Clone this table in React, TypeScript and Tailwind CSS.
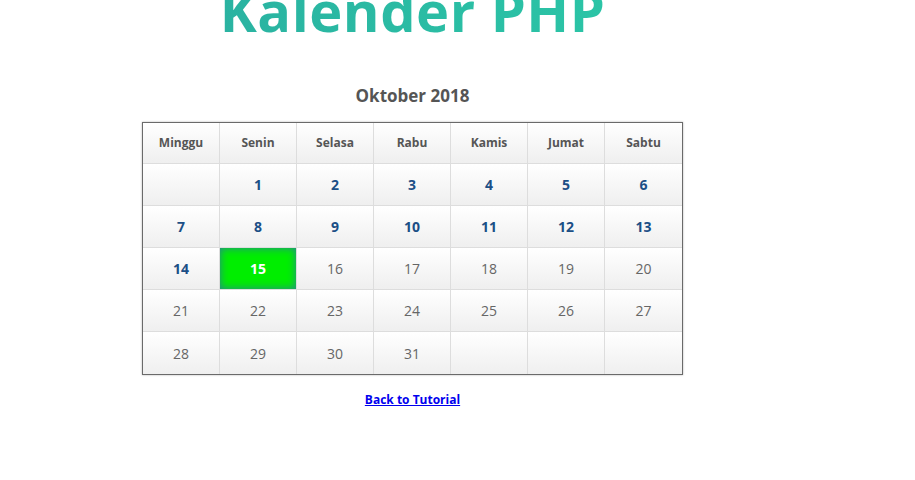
const days = ["Minggu", "Senin", "Selasa", "Rabu", "Kamis", "Jumat", "Sabtu"];

const weeks: (number | null)[][] = [
  [null, 1, 2, 3, 4, 5, 6],
  [7, 8, 9, 10, 11, 12, 13],
  [14, 15, 16, 17, 18, 19, 20],
  [21, 22, 23, 24, 25, 26, 27],
  [28, 29, 30, 31, null, null, null],
];

const today = 15;

const App = () => {
  return (
    <div className="min-h-screen bg-white overflow-hidden font-['Open_Sans',sans-serif]">
      <div className="ml-[142px] w-[541px]">
        <h1 className="-mt-[25px] -mx-[100px] text-center text-[56px] leading-[70px] font-bold tracking-[0.5px] bg-gradient-to-r from-[#2aab9f] to-[#2bcca8] bg-clip-text text-transparent">
          Kalender PHP
        </h1>

        <h2 className="mt-[39px] text-center text-[17px] leading-[24px] font-bold text-[#555]">
          Oktober 2018
        </h2>

        <div className="mt-[14px] border border-[#6a6a6a] shadow-[0_0_2px_rgba(0,0,0,0.3)]">
          <table className="w-full border-separate border-spacing-0 table-fixed">
            <thead>
              <tr>
                {days.map((d, j) => (
                  <th
                    key={d}
                    className={`h-[41px] border-b border-[#ddd] ${
                      j < 6 ? "border-r" : ""
                    } bg-gradient-to-b from-white to-[#efefef] text-[12px] font-bold text-[#555]`}
                  >
                    {d}
                  </th>
                ))}
              </tr>
            </thead>
            <tbody>
              {weeks.map((w, i) => (
                <tr key={i}>
                  {w.map((n, j) => {
                    const isToday = n === today;
                    const past = n !== null && n < today;
                    return (
                      <td
                        key={j}
                        className={`h-[42px] border-[#ddd] ${j < 6 ? "border-r" : ""} ${
                          i < 4 ? "border-b" : ""
                        } text-center text-[14px] ${
                          isToday
                            ? "bg-[#00ee00] shadow-[inset_0_0_9px_#2a7f9a] text-white font-bold"
                            : past
                            ? "bg-gradient-to-b from-white to-[#efefef] text-[#1c4f86] font-bold"
                            : "bg-gradient-to-b from-white to-[#efefef] text-[#666]"
                        }`}
                      >
                        {n ?? ""}
                      </td>
                    );
                  })}
                </tr>
              ))}
            </tbody>
          </table>
        </div>

        <div className="mt-[11px] text-center">
          <a href="#" className="text-[12px] font-bold text-[#0000ee] underline">
            Back to Tutorial
          </a>
        </div>
      </div>
    </div>
  );
};

export default App;
